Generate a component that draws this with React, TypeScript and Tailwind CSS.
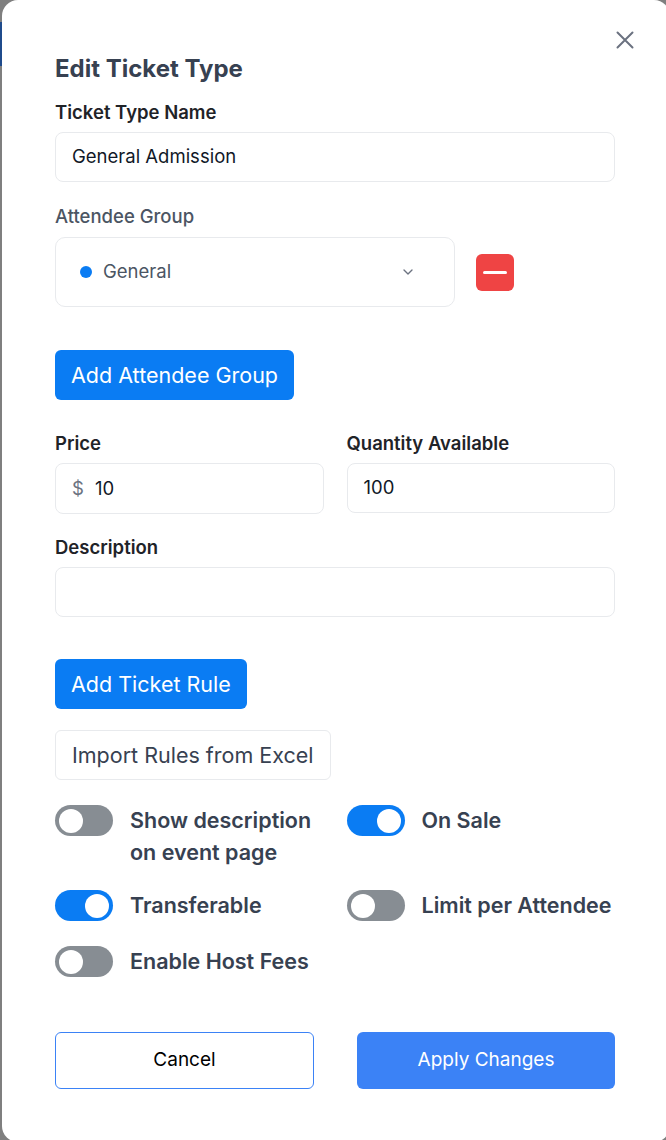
import { ChevronDown } from "lucide-react";

function Toggle({ on }: { on: boolean }) {
  return (
    <span className={`flex h-[31px] w-[58px] shrink-0 items-center rounded-full px-[4px] ${on ? "justify-end bg-[#0a7cf3]" : "justify-start bg-[#878d93]"}`}>
      <span className="h-[24px] w-[24px] rounded-full bg-white" />
    </span>
  );
}

function Switch({ on, children }: { on: boolean; children: React.ReactNode }) {
  return (
    <div className="flex items-start gap-[17px]">
      <div className="pt-[1px]">
        <Toggle on={on} />
      </div>
      <span className="whitespace-nowrap text-[21.5px] font-semibold leading-[32px] text-[#374151]">{children}</span>
    </div>
  );
}

export default function App() {
  return (
    <div className="h-[1140px] w-[666px] overflow-hidden bg-[#7f7f7f]" style={{ fontFamily: "Inter, 'Noto Sans', sans-serif" }}>
      <div className="relative flex">
        <div className="mt-[22px] h-[44px] w-[2px] shrink-0 bg-[#1f4b8c]" />
        <div className="relative h-[1142px] w-[668px] shrink-0 rounded-[16px] bg-white pl-[53px] pr-[53px] pt-[54px]">
          <button type="button" className="absolute right-[35px] top-[30px] text-[#6b7280]">
            <svg width="20" height="20" viewBox="0 0 20 20" fill="none" stroke="currentColor" strokeWidth="2" strokeLinecap="round">
              <path d="M2.5 2.5l15 15M17.5 2.5l-15 15" />
            </svg>
          </button>
          <h2 className="text-[24px] font-bold leading-[30px] text-[#374151]">Edit Ticket Type</h2>

          <label className="mt-[16px] block text-[18.5px] font-semibold leading-[24px] text-[#1f2328]">Ticket Type Name</label>
          <div className="mt-[8px] flex h-[50px] w-[560px] items-center rounded-[8px] border border-[#e8eaed] px-4 text-[18.5px] text-[#111827]">General Admission</div>

          <label className="mt-[22px] block text-[18.5px] font-medium leading-[24px] text-[#4b5563]">Attendee Group</label>
          <div className="mt-[9px] flex items-center gap-[21px]">
            <div className="flex h-[70px] w-[400px] items-center rounded-[10px] border border-[#e8eaed] pl-[24px] pr-[38px]">
              <span className="h-[12px] w-[12px] rounded-full bg-[#0a7cf3]" />
              <span className="ml-[11px] flex-1 text-[18.5px] text-[#4b5563]">General</span>
              <ChevronDown size={16} strokeWidth={2} className="text-[#6b7280]" />
            </div>
            <button type="button" className="flex h-[37px] w-[38px] items-center justify-center rounded-[6px] bg-[#ef4444]">
              <span className="h-[3px] w-[24px] rounded-full bg-white" />
            </button>
          </div>

          <button type="button" className="mt-[43px] flex h-[50px] items-center rounded-[6px] bg-[#0a7cf3] px-4 text-[21.5px] text-white">Add Attendee Group</button>

          <div className="mt-[31px] grid w-[560px] grid-cols-2 gap-x-[23px]">
            <div>
              <label className="block text-[18.5px] font-semibold leading-[24px] text-[#1f2328]">Price</label>
              <div className="mt-[8px] flex h-[51px] items-center rounded-[8px] border border-[#e8eaed] px-4 text-[18.5px]">
                <span className="text-[#6b7280]">$</span>
                <span className="ml-[11px] text-[#111827]">10</span>
              </div>
            </div>
            <div>
              <label className="block text-[18.5px] font-semibold leading-[24px] text-[#1f2328]">Quantity Available</label>
              <div className="mt-[8px] flex h-[50px] items-center rounded-[8px] border border-[#e8eaed] px-4 text-[18.5px] text-[#111827]">100</div>
            </div>
          </div>

          <label className="mt-[21px] block text-[18.5px] font-semibold leading-[24px] text-[#1f2328]">Description</label>
          <div className="mt-[8px] h-[50px] w-[560px] rounded-[8px] border border-[#e8eaed]" />

          <button type="button" className="mt-[42px] flex h-[50px] items-center rounded-[6px] bg-[#0a7cf3] px-4 text-[21.5px] text-white">Add Ticket Rule</button>
          <button type="button" className="mt-[21px] flex h-[50px] items-center rounded-[6px] border border-[#e8eaed] px-4 text-[21.5px] text-[#374151]">Import Rules from Excel</button>

          <div className="mt-[24px] grid w-[560px] grid-cols-2 gap-x-[23px]">
            <Switch on={false}>
              Show description
              <br />
              on event page
            </Switch>
            <Switch on={true}>On Sale</Switch>
          </div>
          <div className="mt-[21px] grid w-[560px] grid-cols-2 gap-x-[23px]">
            <Switch on={true}>Transferable</Switch>
            <Switch on={false}>Limit per Attendee</Switch>
          </div>
          <div className="mt-[24px]">
            <Switch on={false}>Enable Host Fees</Switch>
          </div>

          <div className="mt-[55px] flex w-[560px] justify-between">
            <button type="button" className="h-[57px] w-[259px] rounded-[6px] border border-[#3b82f6] text-[19px] text-black">Cancel</button>
            <button type="button" className="h-[57px] w-[258px] rounded-[6px] bg-[#3b82f6] text-[19px] text-white">Apply Changes</button>
          </div>
        </div>
      </div>
    </div>
  );
}
